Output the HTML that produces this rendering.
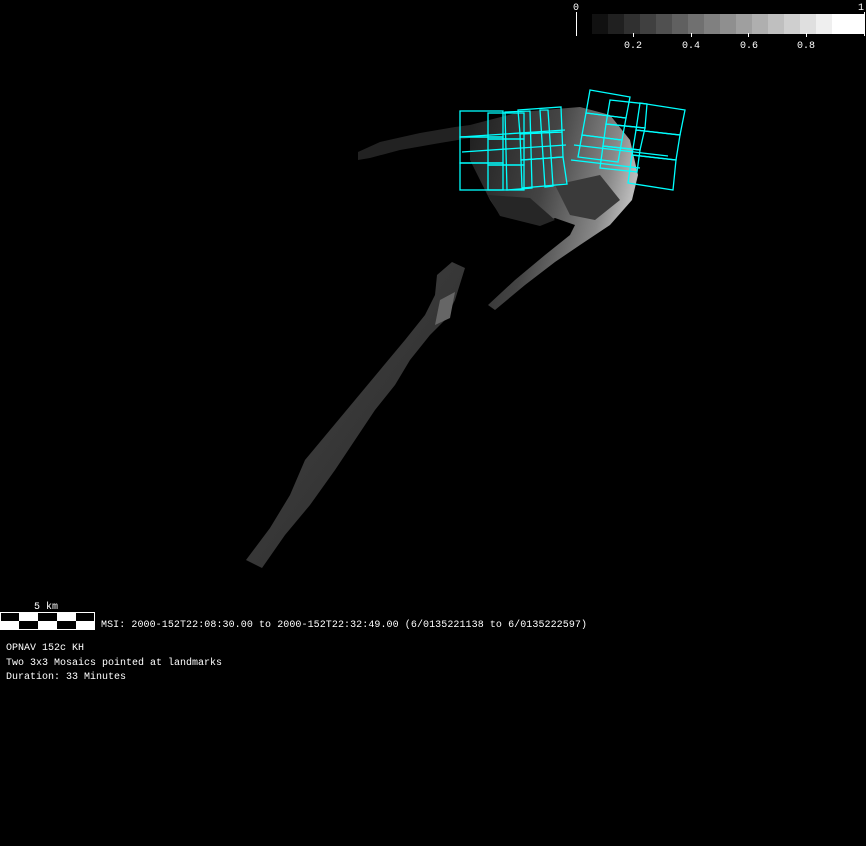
<!DOCTYPE html>
<html><head><style>
html,body{margin:0;padding:0;background:#000;width:866px;height:846px;overflow:hidden}
svg{position:absolute;left:0;top:0}
text{font-family:"Liberation Mono","DejaVu Sans Mono",monospace;font-size:10px;fill:#fff}
</style></head><body>
<svg width="866" height="846" viewBox="0 0 866 846">
<defs>
<linearGradient id="hg" x1="0" y1="0" x2="1" y2="0.3">
<stop offset="0" stop-color="#1e1e1e"/><stop offset="0.5" stop-color="#444"/><stop offset="0.85" stop-color="#888"/><stop offset="1" stop-color="#bbb"/>
</linearGradient>
<linearGradient id="bg" x1="0" y1="0" x2="1" y2="1">
<stop offset="0" stop-color="#444"/><stop offset="1" stop-color="#2a2a2a"/>
</linearGradient>
</defs>
<polygon points="358,152 380,142 420,133 455,127 470,125 470,138 440,143 400,150 370,158 358,160" fill="#222"/>
<path d="M470,125 L520,112 L580,107 L610,115 L630,140 L638,175 L632,200 L610,225 L580,245 L555,262 L525,285 L495,310 L488,305 L515,280 L545,255 L570,235 L575,225 L555,218 L540,225 L520,220 L500,215 L490,200 L480,180 L470,160 Z" fill="url(#hg)"/>
<polygon points="488,195 530,198 555,220 540,226 520,221 500,216" fill="#262626"/>
<polygon points="555,185 600,175 620,200 595,220 570,215" fill="#3a3a3a"/>
<polygon points="437,275 452,262 465,268 455,300 445,320 430,335 410,360 395,385 375,410 355,440 335,470 310,505 285,535 262,568 246,560 270,528 290,495 305,460 330,430 355,400 380,370 405,340 425,315 435,295" fill="url(#bg)"/>
<polygon points="440,300 455,292 450,318 435,325" fill="#666"/>
<g fill="none" stroke="#00ffff" stroke-width="1.3">
<rect x="460" y="111" width="43" height="26"/><rect x="460" y="137" width="43" height="26"/><rect x="460" y="163" width="43" height="27"/>
<rect x="488" y="113" width="36" height="26"/><rect x="488" y="139" width="36" height="26"/><rect x="488" y="165" width="36" height="25"/>
<polygon points="518,110 561,107 562,132 520,134"/><polygon points="520,134 562,132 563,157 521,160"/><polygon points="521,160 563,157 567,184 522,188"/>
<polygon points="505,112 530,111 532,188 507,190"/><polygon points="540,110 548,110 553,186 545,187"/>
<polygon points="460,137 565,130"/><polygon points="462,152 566,145"/>
<polygon points="590,90 630,97 626,118 586,113"/><polygon points="586,113 626,118 622,140 582,135"/><polygon points="582,135 622,140 618,162 578,157"/>
<polygon points="610,100 647,104 645,128 606,124"/><polygon points="606,124 645,128 640,150 603,146"/><polygon points="603,146 640,150 637,172 600,168"/>
<polygon points="640,103 685,110 680,135 636,130"/><polygon points="636,130 680,135 676,160 632,155"/><polygon points="632,155 676,160 673,190 628,183"/>
<line x1="574" y1="145" x2="668" y2="156"/><line x1="571" y1="160" x2="640" y2="168"/>
</g>
<g>
<rect x="592" y="14" width="16" height="20" fill="#111"/><rect x="608" y="14" width="16" height="20" fill="#202020"/><rect x="624" y="14" width="16" height="20" fill="#303030"/><rect x="640" y="14" width="16" height="20" fill="#404040"/><rect x="656" y="14" width="16" height="20" fill="#505050"/><rect x="672" y="14" width="16" height="20" fill="#606060"/><rect x="688" y="14" width="16" height="20" fill="#707070"/><rect x="704" y="14" width="16" height="20" fill="#808080"/><rect x="720" y="14" width="16" height="20" fill="#8f8f8f"/><rect x="736" y="14" width="16" height="20" fill="#9f9f9f"/><rect x="752" y="14" width="16" height="20" fill="#afafaf"/><rect x="768" y="14" width="16" height="20" fill="#bfbfbf"/><rect x="784" y="14" width="16" height="20" fill="#cfcfcf"/><rect x="800" y="14" width="16" height="20" fill="#dfdfdf"/><rect x="816" y="14" width="16" height="20" fill="#efefef"/><rect x="832" y="14" width="32" height="20" fill="#fff"/>
<line x1="576.5" y1="12" x2="576.5" y2="36" stroke="#fff"/>
<line x1="864.5" y1="12" x2="864.5" y2="36" stroke="#fff"/>
<line x1="633.5" y1="33" x2="633.5" y2="37" stroke="#fff"/><line x1="691.5" y1="33" x2="691.5" y2="37" stroke="#fff"/><line x1="748.5" y1="33" x2="748.5" y2="37" stroke="#fff"/><line x1="806.5" y1="33" x2="806.5" y2="37" stroke="#fff"/>
<text x="573" y="10">0</text><text x="858" y="10">1</text>
<text x="624" y="48">0.2</text><text x="682" y="48">0.4</text><text x="740" y="48">0.6</text><text x="797" y="48">0.8</text>
</g>
<rect x="0.5" y="612.5" width="94" height="17" fill="#fff" stroke="#fff"/>
<rect x="1" y="613" width="18" height="8" fill="#000"/><rect x="38" y="613" width="19" height="8" fill="#000"/><rect x="76" y="613" width="18" height="8" fill="#000"/>
<rect x="19" y="621" width="19" height="8" fill="#000"/><rect x="57" y="621" width="19" height="8" fill="#000"/>
<text x="34" y="609">5 km</text>
<text x="101" y="627" textLength="486">MSI:  2000-152T22:08:30.00 to 2000-152T22:32:49.00 (6/0135221138 to 6/0135222597)</text>
<text x="6" y="650">OPNAV 152c KH</text>
<text x="6" y="665">Two 3x3 Mosaics pointed at landmarks</text>
<text x="6" y="679">Duration: 33 Minutes</text>
</svg>
</body></html>
